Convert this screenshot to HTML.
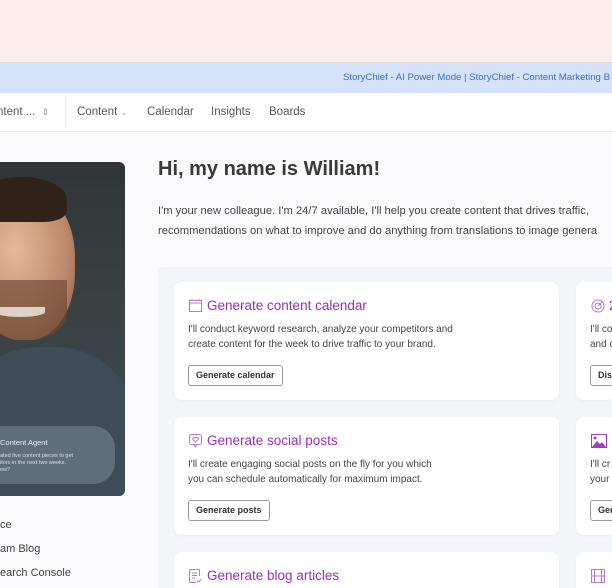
<!DOCTYPE html>
<html><head><meta charset="utf-8"><style>
*{margin:0;padding:0;box-sizing:border-box}
html,body{width:612px;height:588px;overflow:hidden}
body{background:#fbfbfd;font-family:"Liberation Sans",sans-serif;position:relative}
.a{position:absolute}
.card{position:absolute;background:#fff;border-radius:8px;box-shadow:0 1px 3px rgba(0,0,0,0.04)}
.t{position:absolute;left:14px;top:16px;font-size:13.5px;color:#9a2fb8;white-space:nowrap}
.d{position:absolute;left:14px;top:40px;font-size:10px;line-height:15px;color:#444;white-space:nowrap}
.b{position:absolute;left:14px;top:83px;height:21px;border:1px solid #999;border-radius:3px;font-size:9px;font-weight:bold;color:#333;padding:0 7px;line-height:19px;white-space:nowrap;background:#fff}
.ic{position:absolute;left:15px;top:17px}
</style></head><body>
<div class="a" style="left:0;top:0;width:612px;height:62px;background:#fbeeed"></div>
<div class="a" style="left:0;top:62px;width:612px;height:1px;background:#ddd"></div>
<div class="a" style="left:0;top:63px;width:612px;height:30px;background:#d4e2fa"></div>
<div class="a" style="left:343px;top:72px;font-size:9.6px;color:#3a6fd0;white-space:nowrap">StoryChief - AI Power Mode | StoryChief - Content Marketing B</div>
<div class="a" style="left:0;top:93px;width:612px;height:39px;background:#fff;border-bottom:1px solid #ececec"></div>
<div class="a" style="left:65px;top:96px;width:1px;height:33px;background:#eee"></div>
<div class="a" style="left:-3px;top:106px;font-size:11.5px;color:#555;white-space:nowrap">ntent ... &nbsp;<span style="font-size:9px;color:#999">⇕</span></div>
<div class="a" style="left:77px;top:106px;font-size:11.5px;color:#555;white-space:nowrap">Content <span style="font-size:8px;color:#999">⌄</span></div>
<div class="a" style="left:147px;top:106px;font-size:11.5px;color:#555">Calendar</div>
<div class="a" style="left:211px;top:106px;font-size:11.5px;color:#555">Insights</div>
<div class="a" style="left:269px;top:106px;font-size:11.5px;color:#555">Boards</div>

<div class="a" style="left:0;top:162px;width:125px;height:334px;border-radius:0 6px 6px 0;background:linear-gradient(180deg,#2f3536 0%,#3a4142 40%,#3b4750 75%,#2c363d 100%);overflow:hidden">
 <div class="a" style="left:-25px;top:28px;width:100px;height:150px;border-radius:45% 45% 45% 45%;background:radial-gradient(ellipse at 40% 40%,#e6b99c,#c08a6c 60%,#7a5544)"></div>
 <div class="a" style="left:-25px;top:15px;width:92px;height:45px;border-radius:50% 50% 25% 25%;background:#2e2219"></div>
 <div class="a" style="left:-15px;top:118px;width:82px;height:60px;border-radius:0 0 45% 45%;background:#6b4633;opacity:.65"></div>
 <div class="a" style="left:-5px;top:145px;width:50px;height:10px;border-radius:0 0 50% 50%;background:#f4eee8;opacity:.8"></div>
 <div class="a" style="left:-40px;top:185px;width:175px;height:170px;border-radius:45% 45% 0 0;background:#3e4c58"></div>
 <div class="a" style="left:-20px;top:264px;width:135px;height:58px;border-radius:22px;background:rgba(110,125,138,0.7)"></div>
 <div class="a" style="left:0;top:276px;font-size:7.5px;color:#eef">Content Agent</div>
 <div class="a" style="left:0;top:291px;font-size:5.5px;line-height:7px;color:#dde;white-space:nowrap">ated five content pieces to get<br>itors in the next two weeks.<br>ew?</div>
</div>
<div class="a" style="left:0;top:519px;font-size:11px;color:#444">ce</div>
<div class="a" style="left:0;top:543px;font-size:11px;color:#444">am Blog</div>
<div class="a" style="left:0;top:567px;font-size:11px;color:#444">earch Console</div>

<div class="a" style="left:158px;top:158px;font-size:20px;font-weight:bold;color:#3a3a3a;white-space:nowrap">Hi, my name is William!</div>
<div class="a" style="left:158px;top:201px;font-size:11.2px;line-height:20px;color:#444;white-space:nowrap">I'm your new colleague. I'm 24/7 available, I'll help you create content that drives traffic,<br>recommendations on what to improve and do anything from translations to image genera</div>

<div class="a" style="left:158px;top:267px;width:454px;height:321px;background:#f4f5f9;border-radius:6px 0 0 0"></div>

<div class="card" style="left:174px;top:282px;width:385px;height:118px">
 <svg class="ic" width="13" height="13" viewBox="0 0 13 13"><rect x="0.5" y="1.5" width="12" height="11" fill="none" stroke="#b57ad0"/><line x1="0.5" y1="4" x2="12.5" y2="4" stroke="#b57ad0"/><line x1="3" y1="0" x2="3" y2="2" stroke="#b57ad0"/><line x1="10" y1="0" x2="10" y2="2" stroke="#b57ad0"/></svg>
 <div class="t" style="left:33px">Generate content calendar</div>
 <div class="d">I'll conduct keyword research, analyze your competitors and<br>create content for the week to drive traffic to your brand.</div>
 <div class="b">Generate calendar</div>
</div>
<div class="card" style="left:174px;top:417px;width:385px;height:118px">
 <svg class="ic" width="13" height="14" viewBox="0 0 13 14"><rect x="0.5" y="0.5" width="12" height="10" rx="2" fill="none" stroke="#b57ad0"/><path d="M5 10.5L6.5 13L8 10.5" fill="none" stroke="#b57ad0"/><path d="M6.5 8L4 5.5a1.3 1.3 0 0 1 2.5-1.5a1.3 1.3 0 0 1 2.5 1.5Z" fill="none" stroke="#b57ad0"/></svg>
 <div class="t" style="left:33px">Generate social posts</div>
 <div class="d">I'll create engaging social posts on the fly for you which<br>you can schedule automatically for maximum impact.</div>
 <div class="b">Generate posts</div>
</div>
<div class="card" style="left:174px;top:552px;width:385px;height:60px">
 <svg class="ic" width="13" height="14" viewBox="0 0 13 14"><path d="M10.5 7V1.5a1 1 0 0 0-1-1h-8a1 1 0 0 0-1 1v11a1 1 0 0 0 1 1H7" fill="none" stroke="#b57ad0"/><path d="M3 4h5M3 6.5h5M3 9h3" stroke="#b57ad0"/><path d="M8 11.5l1.5 1.5l3-3" fill="none" stroke="#b57ad0"/></svg>
 <div class="t" style="left:33px">Generate blog articles</div>
</div>

<div class="card" style="left:576px;top:282px;width:40px;height:118px">
 <svg class="ic" width="14" height="14" viewBox="0 0 14 14"><circle cx="7" cy="7" r="6" fill="none" stroke="#b57ad0"/><circle cx="7" cy="7" r="3" fill="none" stroke="#b57ad0"/><path d="M7 7L12 2" stroke="#b57ad0"/></svg>
 <div class="t" style="left:33px;color:#9a2fb8">2</div>
 <div class="d">I'll co<br>and c</div>
 <div class="b">Disc</div>
</div>
<div class="card" style="left:576px;top:417px;width:40px;height:118px">
 <svg class="ic" width="16" height="14" viewBox="0 0 16 14"><rect x="0.5" y="0.5" width="15" height="13" fill="none" stroke="#a040c0"/><circle cx="4" cy="4" r="1.5" fill="#a040c0"/><path d="M1 13L6 7L9 10L11 8L15 13Z" fill="#a040c0"/></svg>
 <div class="d">I'll cr<br>your</div>
 <div class="b">Gen</div>
</div>
<div class="card" style="left:576px;top:552px;width:40px;height:60px">
 <svg class="ic" width="14" height="14" viewBox="0 0 14 14"><rect x="0.5" y="0.5" width="13" height="13" fill="none" stroke="#b57ad0"/><path d="M3.5 0.5v13M10.5 0.5v13M0.5 7h13" stroke="#b57ad0"/></svg>
</div>
</body></html>
